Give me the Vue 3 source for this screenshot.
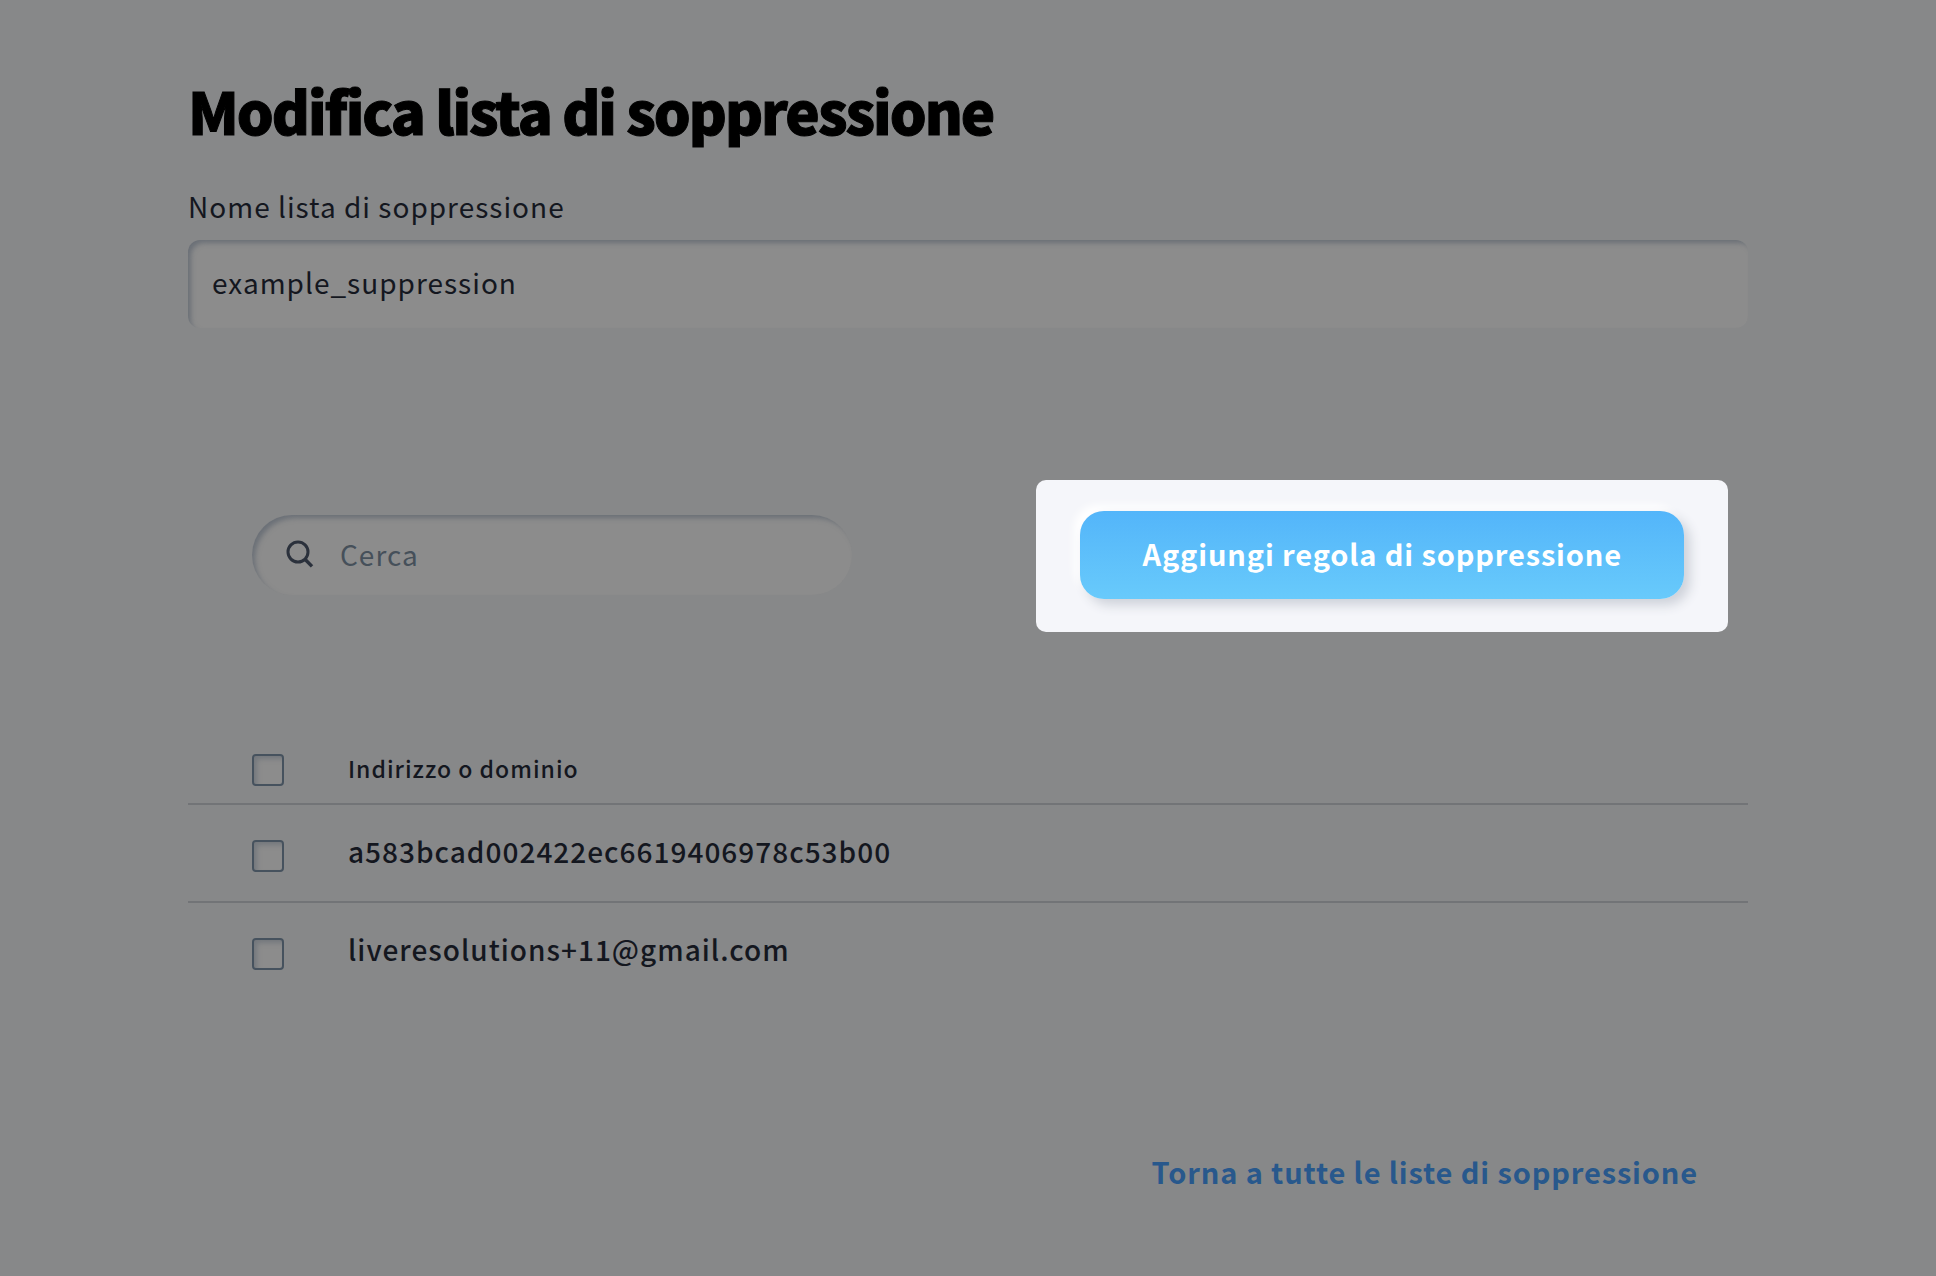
<script setup>
import { ref, computed } from 'vue'

const listName = ref('example_suppression')
const query = ref('')
const selected = ref([])
const rules = ['a583bcad002422ec6619406978c53b00', 'liveresolutions+11@gmail.com']

const visibleRules = computed(() => rules.filter((rule) => rule.includes(query.value.trim())))
const allSelected = computed({
  get: () => selected.value.length === rules.length,
  set: (on) => {
    selected.value = on ? [...rules] : []
  },
})
</script>

<template>
  <main class="page">
    <h1 class="title">Modifica lista di soppressione</h1>

    <label class="label" for="list-name">Nome lista di soppressione</label>
    <input id="list-name" v-model="listName" class="field" type="text" />

    <div class="toolbar">
      <label class="search">
        <svg class="search-icon" viewBox="0 0 32 32" fill="none" aria-hidden="true">
          <circle cx="14" cy="13" r="10" stroke="currentColor" stroke-width="3" />
          <path d="M21 20.2 28 27.4" stroke="currentColor" stroke-width="3.4" />
        </svg>
        <input v-model="query" class="search-input" type="text" placeholder="Cerca" aria-label="Cerca" />
      </label>
      <div class="spotlight">
        <button class="add" type="button">Aggiungi regola di soppressione</button>
      </div>
    </div>

    <table class="rules">
      <thead>
        <tr>
          <th class="tick"><input v-model="allSelected" class="box" type="checkbox" aria-label="Seleziona tutto" /></th>
          <th class="head" scope="col">Indirizzo o dominio</th>
        </tr>
      </thead>
      <tbody>
        <tr v-for="rule in visibleRules" :key="rule">
          <td class="tick"><input v-model="selected" class="box" type="checkbox" :value="rule" :aria-label="rule" /></td>
          <td class="rule">{{ rule }}</td>
        </tr>
      </tbody>
    </table>

    <footer class="footer">
      <a class="back" href="#">Torna a tutte le liste di soppressione</a>
    </footer>
  </main>
</template>

<style>
body {
  margin: 0;
  background: #878889;
}
</style>

<style scoped>
.page {
  box-sizing: border-box;
  min-height: 100vh;
  padding: 70px 188px 64px;
  background: #878889;
  color: #14171f;
  font-family: "Noto Sans CJK SC", "Noto Sans", sans-serif;
  font-size: 28px;
  line-height: 40px;
  letter-spacing: 1px;
}

.title {
  margin: 0;
  color: #000;
  font-size: 58px;
  font-weight: 900;
  line-height: 80px;
  letter-spacing: -2px;
  -webkit-text-stroke: 1px #000;
}

.label {
  display: block;
  margin-top: 36px;
}

.field {
  display: block;
  box-sizing: border-box;
  width: 100%;
  height: 88px;
  margin-top: 14px;
  padding: 0 24px 4px;
  border: 0;
  border-radius: 12px;
  outline: 0;
  background: #8c8c8c;
  box-shadow: inset 4px 4px 5px -1px #6b7077;
  color: inherit;
  font: inherit;
  letter-spacing: inherit;
}

.toolbar {
  display: flex;
  align-items: center;
  justify-content: space-between;
  margin-top: 152px;
  padding: 0 20px 0 64px;
}

.search {
  display: flex;
  align-items: center;
  gap: 24px;
  box-sizing: border-box;
  width: 600px;
  height: 80px;
  margin-bottom: 2px;
  padding: 0 32px;
  border-radius: 40px;
  background: #8c8c8c;
  box-shadow: inset 4px 4px 5px -1px #6b7077;
}

.search-icon {
  flex: none;
  width: 32px;
  height: 32px;
  color: #2b313c;
}

.search-input {
  flex: 1;
  min-width: 0;
  padding: 0 0 2px;
  border: 0;
  outline: 0;
  background: none;
  color: inherit;
  font: inherit;
  letter-spacing: inherit;
}

.search-input::placeholder {
  color: #46505a;
  opacity: 1;
}

.spotlight {
  padding: 31px 44px 33px;
  border-radius: 10px;
  background: #f5f6fa;
}

.add {
  display: block;
  height: 88px;
  padding: 0 62px 4px;
  border: 0;
  border-radius: 24px;
  background: linear-gradient(#53b5fa, #68cafb);
  box-shadow: 6px 6px 12px #cdd1d9, -6px -6px 8px #fff;
  color: #fff;
  font: inherit;
  font-size: 29px;
  font-weight: 700;
  letter-spacing: 0.03em;
}

.rules {
  width: 100%;
  margin-top: 106px;
  border-collapse: separate;
  border-spacing: 0;
}

.rules th {
  height: 59px;
  padding: 0 0 6px;
  border-bottom: 2px solid #727477;
  text-align: left;
}

.rules td {
  height: 92px;
  padding: 0 0 4px;
}

.rules tbody tr:not(:last-child) td {
  border-bottom: 2px solid #727477;
}

.rules .tick {
  width: 96px;
  padding-left: 64px;
}

.rules th.tick {
  height: 63px;
  padding-bottom: 2px;
}

.rules td.tick {
  height: 90px;
  padding-top: 6px;
  padding-bottom: 0;
}

.rules .head {
  font-size: 23px;
  font-weight: 500;
}

.rule {
  font-weight: 500;
}

.box {
  display: block;
  box-sizing: border-box;
  width: 32px;
  height: 32px;
  margin: 0;
  appearance: none;
  border: 2px solid #46525e;
  border-radius: 4px;
  background: #8c8c8c;
  box-shadow: inset 4px 4px 5px -1px #74787d;
}

.box:checked {
  background: #28588c;
}

.footer {
  display: flex;
  justify-content: flex-end;
  margin-top: 152px;
  padding-right: 50px;
}

.back {
  color: #28588c;
  font-size: 29px;
  font-weight: 700;
  letter-spacing: 0.03em;
  text-decoration: none;
}
</style>
